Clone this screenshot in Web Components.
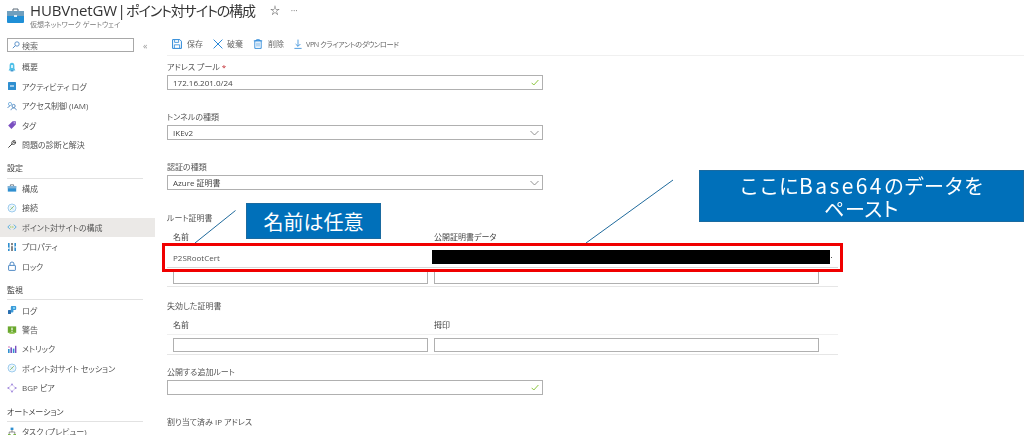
<!DOCTYPE html>
<html lang="ja">
<head>
<meta charset="utf-8">
<title>ポイント対サイトの構成</title>
<style>
  html, body { margin: 0; height: 435px; overflow: hidden; background: #fff; }
  body {
    font-family: "Open Sans", "Noto Sans CJK JP", sans-serif;
    font-feature-settings: "palt";
    color: #4a4a4a;
    font-size: 8px;
  }
</style>
</head>
<body>
<portal-page>
  <portal-header slot="header" resource="HUBVnetGW" blade="ポイント対サイトの構成" subtitle="仮想ネットワーク ゲートウェイ"></portal-header>
  <side-nav slot="nav">
    <nav-item icon="overview">概要</nav-item>
    <nav-item icon="log">アクティビティ ログ</nav-item>
    <nav-item icon="iam">アクセス制御 (IAM)</nav-item>
    <nav-item icon="tag">タグ</nav-item>
    <nav-item icon="wrench">問題の診断と解決</nav-item>
    <nav-heading>設定</nav-heading>
    <nav-item icon="case">構成</nav-item>
    <nav-item icon="link">接続</nav-item>
    <nav-item icon="p2s" selected>ポイント対サイトの構成</nav-item>
    <nav-item icon="props">プロパティ</nav-item>
    <nav-item icon="lock">ロック</nav-item>
    <nav-heading>監視</nav-heading>
    <nav-item icon="logs">ログ</nav-item>
    <nav-item icon="alert">警告</nav-item>
    <nav-item icon="metric">メトリック</nav-item>
    <nav-item icon="link">ポイント対サイト セッション</nav-item>
    <nav-item icon="bgp">BGP ピア</nav-item>
    <nav-heading>オートメーション</nav-heading>
    <nav-item icon="task">タスク (プレビュー)</nav-item>
  </side-nav>
  <command-bar slot="commands"></command-bar>
  <config-form slot="form"></config-form>
  <note-overlay slot="overlay"></note-overlay>
</portal-page>

<script>
const iconSet = {
  overview: '<path d="M5 .8C3.4.8 2.6 2 2.6 3.6v3L1.6 8.4h6.8l-1-1.8v-3C7.4 2 6.6.8 5 .8z" fill="#50c0e8"/><rect x="3.6" y="8.2" width="2.8" height="1.2" fill="#2b88c8"/><rect x="4" y="3" width="2" height="3" fill="#d6f1fb"/>',
  log: '<rect x="1" y="1" width="8" height="8" rx=".6" fill="#2f8fd0"/><rect x="3" y="4.4" width="4" height="1.2" fill="#e8f4fc"/>',
  iam: '<circle cx="3" cy="3" r="1.6" fill="none" stroke="#6aa8dc" stroke-width=".8"/><circle cx="6.6" cy="5" r="1.6" fill="none" stroke="#3a78b8" stroke-width=".8"/><path d="M.8 7c.4-1.4 1.2-1.8 2.2-1.8M4 9.2c.2-1.6 1.2-2.2 2.6-2.2S9 7.6 9.3 9.2" fill="none" stroke="#3a78b8" stroke-width=".8"/>',
  tag: '<path d="M1.2 5.4 5.6 1.2h3.2v3.4L4.4 9z" fill="#7a4fc0"/><circle cx="7.2" cy="2.8" r=".6" fill="#fff"/>',
  wrench: '<path d="M1.4 8.6 5 5M5 5c-.8-1.8.6-3.8 2.8-3.4L6.4 3l.8 1 1.4-1.2C9 5 7 6 5 5z" fill="none" stroke="#444" stroke-width="1"/>',
  case: '<rect x=".8" y="3" width="8.4" height="5.6" fill="#2f8fd0"/><rect x=".8" y="3" width="8.4" height="2.4" fill="#7fb2d8"/><path d="M3.4 3V1.8h3.2V3" fill="none" stroke="#5a6a78" stroke-width=".8"/>',
  link: '<circle cx="5" cy="5" r="4" fill="#eef7fd" stroke="#8ac2ea" stroke-width=".8"/><path d="M3.2 6.8 6.8 3.2" stroke="#7ab648" stroke-width=".8"/><path d="M3.2 3.6 6.6 6.8" stroke="#8ac2ea" stroke-width=".5"/>',
  p2s: '<path d="M3.2 2.6.8 5l2.4 2.4M6.8 2.6 9.2 5 6.8 7.4" fill="none" stroke="#4aa8e0" stroke-width=".9"/><path d="M3.2 5h3.6" stroke="#8cc63f" stroke-width="1" stroke-dasharray="1 .6"/>',
  props: '<rect x="1" y="1" width="1.6" height="8" fill="#2f8fd0"/><rect x="4.2" y="1" width="1.6" height="8" fill="#666"/><rect x="7.4" y="1" width="1.6" height="8" fill="#2f8fd0"/><rect x="4.2" y="3" width="1.6" height="1.2" fill="#fff"/><rect x="1" y="5.6" width="1.6" height="1.2" fill="#fff"/><rect x="7.4" y="4.4" width="1.6" height="1.2" fill="#fff"/>',
  lock: '<rect x="1.6" y="4.4" width="6.8" height="5" rx=".5" fill="none" stroke="#3f7fc0" stroke-width=".9"/><path d="M3 4.4V3a2 2 0 0 1 4 0v1.4" fill="none" stroke="#3f7fc0" stroke-width=".9"/>',
  logs: '<path d="M4.4 1h3.8a1 1 0 0 1 1 1v2a1 1 0 0 1-1 1H6.4v1.6a1 1 0 0 1-1 1H3.8V3c0-1 .2-2 .6-2z" fill="#3a9ad9"/><rect x="1" y="5" width="3" height="4" rx=".5" fill="#2a6fb0"/><rect x="6" y="2" width="2" height="2" fill="#7fd0f0"/>',
  alert: '<rect x=".8" y="1.4" width="8.4" height="6.4" fill="#6aa82e"/><rect x="4.4" y="2.6" width="1.2" height="2.6" fill="#fff"/><rect x="4.4" y="5.8" width="1.2" height="1" fill="#fff"/><rect x="2.4" y="7.8" width="5.2" height="1" fill="#8cc63f"/>',
  metric: '<rect x="1" y="5" width="1.6" height="4" fill="#2f8fd0"/><rect x="3.4" y="3.4" width="1.6" height="5.6" fill="#7a4fc0"/><rect x="5.8" y="4.6" width="1.6" height="4.4" fill="#2f8fd0"/><rect x="8" y="1.8" width="1.4" height="7.2" fill="#7a4fc0"/><circle cx="2" cy="3" r=".7" fill="#c03fa0"/>',
  bgp: '<path d="M5 1.4 8.6 5 5 8.6 1.4 5z" fill="none" stroke="#c8b8ea" stroke-width=".8"/><circle cx="5" cy="1.4" r="1" fill="#a58ede"/><circle cx="8.6" cy="5" r="1" fill="#a58ede"/><circle cx="5" cy="8.6" r="1" fill="#a58ede"/><circle cx="1.4" cy="5" r="1" fill="#a58ede"/>',
  task: '<rect x="3.6" y=".6" width="2.8" height="2.4" fill="#2f8fd0"/><path d="M5 3v2M2.2 7V5h5.6v2" fill="none" stroke="#666" stroke-width=".7"/><rect x="1" y="7" width="2.6" height="2.4" fill="#7ab648"/><rect x="6.4" y="7" width="2.6" height="2.4" fill="#7ab648"/>'
};

class PortalPage extends HTMLElement {
  constructor() {
    super();
    this.attachShadow({ mode: "open" });
    this.shadowRoot.innerHTML = `
      <style>
        :host { display: block; position: relative; width: 1024px; height: 435px; overflow: hidden; filter: blur(.3px); }
        .body { display: flex; height: 401px; }
        .side { flex: 0 0 155px; }
        .main { flex: 1; padding-left: 12px; min-width: 0; }
      </style>
      <slot name="header"></slot>
      <div class="body">
        <div class="side"><slot name="nav"></slot></div>
        <div class="main"><slot name="commands"></slot><slot name="form"></slot></div>
      </div>
      <slot name="overlay"></slot>
    `;
  }
}

class PortalHeader extends HTMLElement {
  constructor() {
    super();
    this.attachShadow({ mode: "open" });
  }
  connectedCallback() {
    this.shadowRoot.innerHTML = `
      <style>
        :host { display: flex; height: 34px; box-sizing: border-box; padding-left: 7px; }
        svg { flex: none; margin-top: 8px; }
        .text { margin-left: 6px; }
        h1 { margin: 0; padding-top: 1px; font-size: 15px; line-height: 19px; font-weight: 400; color: #333; display: flex; align-items: center; letter-spacing: -.15px; }
        .sep { margin: 0 .5px; }
        .blade { font-size: 14px; letter-spacing: -1.1px; }
        .star { margin-left: 15px; font-size: 10px; color: #555; }
        .more { margin-left: 11px; font-size: 9px; color: #777; }
        p { margin: 0; font-size: 7px; line-height: 9px; color: #777; }
      </style>
      <svg width="17" height="15" viewBox="0 0 17 15">
        <path d="M6 3V1h5v2" fill="none" stroke="#5a6a78" stroke-width="1"/>
        <rect x="0" y="3" width="17" height="12" rx="1" fill="#1f8fd6"/>
        <rect x="0" y="3" width="17" height="5" fill="#6f9fbe"/>
        <rect x="7" y="7" width="3" height="2" fill="#d7ecf9"/>
      </svg>
      <div class="text">
        <h1>${this.getAttribute("resource")}<span class="sep">|</span><span class="blade">${this.getAttribute("blade")}</span><span class="star">☆</span><span class="more">···</span></h1>
        <p>${this.getAttribute("subtitle")}</p>
      </div>
    `;
  }
}

class SideNav extends HTMLElement {
  constructor() {
    super();
    this.attachShadow({ mode: "open" });
    this.shadowRoot.innerHTML = `
      <style>
        :host { display: block; }
        .search { display: flex; align-items: center; padding: 4px 0 5px 7px; height: 14px; }
        .box { width: 127px; height: 14px; box-sizing: border-box; border: 1px solid #a8a8a8; display: flex; align-items: center; padding-left: 4px; gap: 2px; color: #666; }
        .fold { margin-left: 9px; color: #999; font-size: 9px; }
      </style>
      <div class="search">
        <div class="box">
          <svg width="8" height="8" viewBox="0 0 8 8"><circle cx="5" cy="3" r="2.2" fill="none" stroke="#3f7fc0" stroke-width=".8"/><path d="M3.4 4.6.8 7.2" stroke="#3f7fc0" stroke-width=".9"/></svg>
          <span>検索</span>
        </div>
        <span class="fold">«</span>
      </div>
      <slot></slot>
    `;
  }
}

class NavItem extends HTMLElement {
  constructor() {
    super();
    this.attachShadow({ mode: "open" });
  }
  connectedCallback() {
    this.shadowRoot.innerHTML = `
      <style>
        :host { display: flex; align-items: center; height: 19.45px; padding-left: 7px; gap: 5px; font-size: 8px; color: #555; }
        :host([selected]) { background: #ebe9e7; }
        svg { flex: none; }
      </style>
      <svg width="10" height="10" viewBox="0 0 10 10">${iconSet[this.getAttribute("icon")] || ""}</svg>
      <slot></slot>
    `;
  }
}

class NavHeading extends HTMLElement {
  constructor() {
    super();
    this.attachShadow({ mode: "open" });
    this.shadowRoot.innerHTML = `
      <style>
        :host { display: block; box-sizing: border-box; height: 24.5px; margin: 0 12px 0 7px; padding-top: 8px; border-bottom: 1px solid #e2e2e2; font-size: 8px; line-height: 11px; color: #444; }
      </style>
      <slot></slot>
    `;
  }
}

class CommandBar extends HTMLElement {
  constructor() {
    super();
    this.attachShadow({ mode: "open" });
    this.shadowRoot.innerHTML = `
      <style>
        :host { display: flex; align-items: center; box-sizing: border-box; height: 22px; padding: 0 0 2px 5px; border-bottom: 1px solid #f0f0f0; font-size: 8px; color: #666; }
        span { margin-left: 5px; }
        svg { flex: none; }
        .gap { margin-left: 10px; }
        .vpn { margin-left: 3px; font-size: 7.2px; letter-spacing: -.4px; }
      </style>
      <svg width="10" height="10" viewBox="0 0 10 10"><path d="M.6.6h7.2l1.6 1.6v7.2H.6z" fill="none" stroke="#2b88d8"/><path d="M2.6 1v2.4h4V1M2.4 9V5.800h5.200V9" fill="none" stroke="#2b88d8" stroke-width=".8"/></svg>
      <span>保存</span>
      <svg class="gap" width="10" height="10" viewBox="0 0 10 10"><path d="M.6.6l8.8 8.8M9.4.6.6 9.4" stroke="#2b88d8"/></svg>
      <span style="margin-left:4px">破棄</span>
      <svg class="gap" width="10" height="10" viewBox="0 0 10 10"><path d="M.8 1.800h8.400M3.600 1.800V.6h2.800v1.200" fill="none" stroke="#2b88d8" stroke-width=".8"/><path d="M1.800 1.800h6.400v7.600H1.800z" fill="none" stroke="#2b88d8" stroke-width=".9"/><path d="M4 3.600v4M6 3.600v4" stroke="#2b88d8" stroke-width=".7"/></svg>
      <span>削除</span>
      <svg class="gap" style="margin-left:9px" width="10" height="10" viewBox="0 0 10 10"><path d="M5 .6v6.600M2.600 5 5 7.400 7.400 5M1.400 9.400h7.200" fill="none" stroke="#2b88d8" stroke-width=".8"/></svg>
      <span class="vpn">VPN クライアントのダウンロード</span>
    `;
  }
}

class FormField extends HTMLElement {
  constructor() {
    super();
    this.attachShadow({ mode: "open" });
  }
  connectedCallback() {
    const mark = this.getAttribute("mark");
    const markSvg = mark === "check"
      ? '<svg width="8" height="7" viewBox="0 0 8 7"><path d="M.6 3.800 2.800 6 7.400 1" fill="none" stroke="#8cc63f"/></svg>'
      : mark === "chevron"
      ? '<svg width="9" height="6" viewBox="0 0 9 6"><path d="M.5 1 4.500 5 8.500 1" fill="none" stroke="#777" stroke-width=".8"/></svg>'
      : "";
    const star = this.hasAttribute("required") ? '<i>*</i>' : "";
    this.shadowRoot.innerHTML = `
      <style>
        :host { display: block; width: 376px; }
        label { display: block; height: 14px; line-height: 12px; font-size: 8px; color: #555; }
        i { font-style: normal; color: #c0272d; margin-left: 2px; }
        .box { box-sizing: border-box; height: 15px; border: 1px solid #b0b0b0; border-bottom-width: 1.5px; display: flex; align-items: center; justify-content: space-between; padding: 0 3px 0 5px; font-size: 8px; color: #444; }
      </style>
      <label>${this.getAttribute("label")}${star}</label>
      <div class="box"><span>${this.getAttribute("value") || ""}</span>${markSvg}</div>
    `;
  }
}

class CertTable extends HTMLElement {
  constructor() {
    super();
    this.attachShadow({ mode: "open" });
  }
  connectedCallback() {
    const col2 = this.getAttribute("col2");
    const filled = this.getAttribute("cert-name");
    const row = filled ? `
      <div class="row filled">
        <span>${filled}</span>
        <span class="secret"></span>
        <span class="dot"></span>
      </div>` : '<div class="spacer"></div>';
    this.shadowRoot.innerHTML = `
      <style>
        :host { display: block; width: 671px; }
        .title { height: 13px; line-height: 13px; font-size: 8px; color: #555; }
        .cols { display: grid; grid-template-columns: 261px 1fr; padding-left: 6px; font-size: 8px; color: #444; }
        .head { height: 14px; line-height: 14px; margin-top: 6px; }
        .row { display: grid; grid-template-columns: 261px 398px 1px; padding-left: 6px; }
        .filled { box-sizing: border-box; height: 24px; padding-top: 3px; align-items: center; border-bottom: 1px solid #d8d8d8; font-size: 8px; color: #555; }
        .secret { display: block; width: 398px; height: 14px; margin-left: -2px; background: #000; }
        .dot { display: block; width: 1px; height: 1px; margin-left: -1px; background: #555; }
        .spacer { box-sizing: border-box; height: 3px; border-bottom: 1px solid #f0f0f0; }
        .inputs { display: grid; grid-template-columns: 255px 385px; column-gap: 6px; padding: 3px 0 2px 6px; border-bottom: 1px solid #e6e6e6; }
        .inputs div { box-sizing: border-box; height: ${filled ? 13 : 14}px; border: 1px solid #b0b0b0; }
      </style>
      <div class="title">${this.getAttribute("heading")}</div>
      <div class="cols head"><span>名前</span><span>${col2}</span></div>
      ${row}
      <div class="inputs"><div></div><div></div></div>
    `;
  }
}

class ConfigForm extends HTMLElement {
  constructor() {
    super();
    this.attachShadow({ mode: "open" });
    this.shadowRoot.innerHTML = `
      <style>
        :host { display: block; padding-top: 5px; }
        form-field { margin-bottom: 21px; }
        .assigned { margin-top: 20px; font-size: 8px; line-height: 12px; color: #555; }
        .root { margin-top: 21px; }
        .revoked { margin-top: 12px; }
        .revoked + form-field { margin-top: 11px; }
      </style>
      <form-field label="アドレス プール" required value="172.16.201.0/24" mark="check"></form-field>
      <form-field label="トンネルの種類" value="IKEv2" mark="chevron"></form-field>
      <form-field label="認証の種類" value="Azure 証明書" mark="chevron"></form-field>
      <cert-table class="root" heading="ルート証明書" col2="公開証明書データ" cert-name="P2SRootCert"></cert-table>
      <cert-table class="revoked" heading="失効した証明書" col2="拇印"></cert-table>
      <form-field label="公開する追加ルート" mark="check"></form-field>
      <div class="assigned">割り当て済み IP アドレス</div>
    `;
  }
}

// callouts and the red frame lie over the page
class NoteOverlay extends HTMLElement {
  constructor() {
    super();
    this.attachShadow({ mode: "open" });
    this.shadowRoot.innerHTML = `
      <style>
        :host { position: absolute; inset: 0; pointer-events: none; }
        .note { position: absolute; box-sizing: border-box; background: #0070ba; border: 1px solid #1a6aa0; color: #fff; font-size: 20px; line-height: 23px; text-align: center; font-family: "Noto Sans CJK JP", sans-serif; font-feature-settings: normal; }
        .one { left: 246px; top: 203px; width: 135px; height: 36px; padding-top: 6px; }
        .two { left: 699px; top: 170px; width: 325px; height: 52px; padding-top: 3px; }
        .latin { font-size: 21px; letter-spacing: 2.4px; }
        .kana { font-feature-settings: "palt"; letter-spacing: .6px; }
        .frame { position: absolute; left: 162px; top: 243px; width: 681px; height: 29px; box-sizing: border-box; border: 3px solid #f00000; }
        svg { position: absolute; left: 0; top: 0; }
      </style>
      <svg width="1024" height="435">
        <path d="M195 243 235.500 210.500M586 243 673 180" stroke="#1f6a9c" stroke-width="1"/>
      </svg>
      <div class="frame"></div>
      <div class="note one">名前は任意</div>
      <div class="note two">ここに<span class="latin">Base64</span>のデータを<br><span class="kana">ペースト</span></div>
    `;
  }
}

customElements.define("portal-page", PortalPage);
customElements.define("portal-header", PortalHeader);
customElements.define("side-nav", SideNav);
customElements.define("nav-item", NavItem);
customElements.define("nav-heading", NavHeading);
customElements.define("command-bar", CommandBar);
customElements.define("form-field", FormField);
customElements.define("cert-table", CertTable);
customElements.define("config-form", ConfigForm);
customElements.define("note-overlay", NoteOverlay);
</script>
</body>
</html>
